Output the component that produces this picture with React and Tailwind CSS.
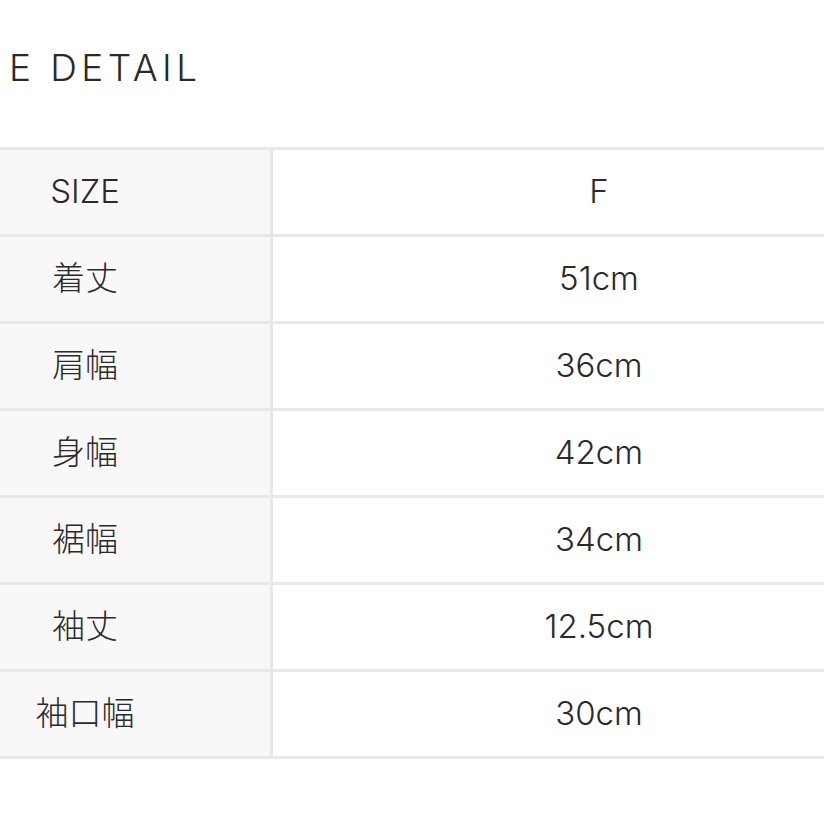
import React from "react";

const rows = [
  { label: "SIZE", value: "F" },
  { label: "着丈", value: "51cm" },
  { label: "肩幅", value: "36cm" },
  { label: "身幅", value: "42cm" },
  { label: "裾幅", value: "34cm" },
  { label: "袖丈", value: "12.5cm" },
  { label: "袖口幅", value: "30cm" },
];

const App = () => {
  return (
    <div
      className="w-[824px] h-[824px] overflow-hidden bg-white text-[#2a2a2a]"
      style={{ fontFamily: '"Inter", "Noto Sans CJK JP", sans-serif' }}
    >
      <h2 className="pl-[9px] pt-[48px] h-[147px] text-[37px] leading-[40px] font-light tracking-[0.12em]">
        E DETAIL
      </h2>
      <div className="ml-[-100px] w-[1025px] border-t-[3px] border-[#e8e8e8]">
        {rows.map((row) => (
          <div key={row.label} className="flex h-[87px] border-b-[3px] border-[#e8e8e8]">
            <div className="w-[373px] flex items-center justify-center bg-[#f8f8f8] border-r-[3px] border-[#e8e8e8] text-[33px] font-light">
              {row.label}
            </div>
            <div className="flex-1 flex items-center justify-center text-[33px] font-light">
              {row.value}
            </div>
          </div>
        ))}
      </div>
    </div>
  );
};

export default App;
